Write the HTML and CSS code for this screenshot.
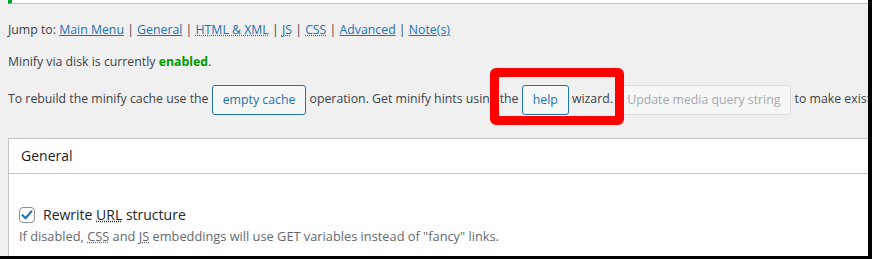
FILE: index.html
```html
<!DOCTYPE html>
<html lang="en">

<head>
    <meta charset="utf-8">
    <title>Minify settings</title>
    <link rel="stylesheet" href="styles.css">
</head>

<body>

    <!-- notice, scrolled off the top -->
    <div class="notice"></div>

    <p class="jump">Jump to: <a href="#">Main Menu</a> | <a href="#">General</a> | <a href="#" class="abbr">HTML &amp; XML</a> | <a href="#" class="abbr">JS</a> | <a href="#" class="abbr">CSS</a> | <a href="#">Advanced</a> | <a href="#">Note(s)</a></p>

    <p>Minify via disk is currently <span class="enabled">enabled</span>.</p>

    <p class="rebuild">To rebuild the minify cache use the <button class="button">empty cache</button> operation. Get minify hints using the <button class="button">help</button> wizard. <button class="button" disabled>Update media query string</button> to make existing file modifications visible to visitors with a primed cache.</p>

    <!-- annotation -->
    <div class="highlight"></div>

    <div class="postbox">
        <h3 class="postbox-title">General</h3>
        <div class="inside">
            <label class="option">
                <span class="checkbox">
                    <svg width="14" height="14" viewBox="0 0 14 14">
                        <path d="M2.6 7.2 L5.6 10.2 L11.4 3.4" fill="none" stroke="#2271b1" stroke-width="2.2" stroke-linecap="round" stroke-linejoin="round" />
                    </svg>
                </span>
                <span>Rewrite <abbr>URL</abbr> structure</span>
            </label>
            <p class="description">If disabled, <abbr>CSS</abbr> and <abbr>JS</abbr> embeddings will use GET variables instead of "fancy" links.</p>
        </div>
    </div>

</body>

</html>
```

FILE: styles.css
```css
* {
    box-sizing: border-box;
}

html {
    overflow: hidden;
    background: #000;
}

body {
    position: relative;
    width: 872px;
    height: 259px;
    margin: 0;
    padding: 0 0 0 8px;
    overflow: hidden;
    background: #f0f0f1;
    border-right: 4px solid #000;
    border-bottom: 3px solid #000;
    font-family: "Open Sans", sans-serif;
    font-size: 12.3px;
    color: #3c434a;
}

p {
    margin: 12px 0;
    line-height: 20px;
}

a {
    color: #2271b1;
}

a.abbr {
    text-decoration: underline dotted;
}

abbr {
    text-decoration: underline dotted;
}

/* bout de notice en haut */
.notice {
    height: 4px;
    margin-right: -20px;
    background: #fff;
    border-left: 4px solid #00a32a;
    border-bottom: 1px solid #c3c4c7;
}

.jump {
    margin-top: 16px;
}

.enabled {
    color: #009900;
    font-weight: bold;
}

.rebuild {
    margin-top: 9px;
    white-space: nowrap;
    line-height: 30px;
}

.button {
    display: inline-block;
    height: 30px;
    padding: 0 10px;
    vertical-align: middle;
    font-family: inherit;
    font-size: 12.3px;
    color: #2271b1;
    background: #f6f7f7;
    border: 1px solid #2271b1;
    border-radius: 3px;
}

.button:disabled {
    color: #a7aaad;
    border-color: #dcdcde;
}

/* cadre rouge */
.highlight {
    position: absolute;
    left: 490px;
    top: 68px;
    width: 134px;
    height: 57px;
    border: 9px solid #ff0000;
    border-radius: 6px;
}

.postbox {
    margin: 23px -20px 0 0;
    background: #fff;
    border: 1px solid #c3c4c7;
}

.postbox-title {
    margin: 0;
    padding: 8px 12px;
    font-size: 14px;
    font-weight: normal;
    line-height: 18px;
    color: #1d2327;
    border-bottom: 1px solid #c3c4c7;
}

.inside {
    padding: 31px 10px 10px;
}

.option {
    display: flex;
    align-items: center;
    gap: 8px;
    font-size: 14px;
    line-height: 20px;
    color: #1d2327;
}

.checkbox {
    display: flex;
    align-items: center;
    justify-content: center;
    width: 16px;
    height: 16px;
    border: 1px solid #8c8f94;
    border-radius: 4px;
    background: #fff;
}

.description {
    margin: 1px 0 0;
    font-size: 12.8px;
    color: #646970;
}
```
